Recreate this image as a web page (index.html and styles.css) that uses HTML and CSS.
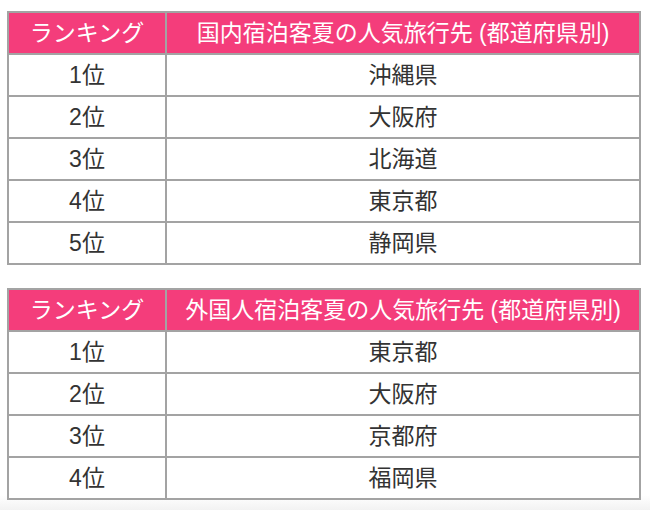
FILE: index.html
```html
<!DOCTYPE html>
<html lang="ja">
<head>
<meta charset="utf-8">
<link rel="stylesheet" href="styles.css">
</head>
<body>
<div class="page">
<table class="rank">
  <thead>
    <tr><th class="c1">ランキング</th><th class="c2">国内宿泊客夏の人気旅行先 (都道府県別)</th></tr>
  </thead>
  <tbody>
    <tr><td>1位</td><td>沖縄県</td></tr>
    <tr><td>2位</td><td>大阪府</td></tr>
    <tr><td>3位</td><td>北海道</td></tr>
    <tr><td>4位</td><td>東京都</td></tr>
    <tr><td>5位</td><td>静岡県</td></tr>
  </tbody>
</table>
<table class="rank">
  <thead>
    <tr><th class="c1">ランキング</th><th class="c2">外国人宿泊客夏の人気旅行先 (都道府県別)</th></tr>
  </thead>
  <tbody>
    <tr><td>1位</td><td>東京都</td></tr>
    <tr><td>2位</td><td>大阪府</td></tr>
    <tr><td>3位</td><td>京都府</td></tr>
    <tr><td>4位</td><td>福岡県</td></tr>
  </tbody>
</table>
</div>
</body>
</html>
```

FILE: styles.css
```css
html, body {
  margin: 0;
  padding: 0;
  height: 100%;
}
body {
  background: linear-gradient(to bottom, #ffffff 0, #ffffff 495px, #f2f2f2 510px);
  font-family: "Liberation Sans", "Noto Sans CJK JP", sans-serif;
  color: #333333;
}
.page {
  padding: 11px 9px 0 7px;
  display: flex;
  flex-direction: column;
  gap: 23px;
}
.rank {
  width: 634px;
  border-collapse: collapse;
  border: 2px solid #a3a3a3;
  background: #ffffff;
  table-layout: fixed;
}
.rank th, .rank td {
  border: 2px solid #a3a3a3;
  height: 40px;
  padding: 0;
  text-align: center;
  vertical-align: middle;
  font-size: 23px;
  line-height: 40px;
  font-weight: normal;
}
.rank th {
  background: #f43d7b;
  color: #ffffff;
}
.rank .c1 { width: 156px; }
.rank td { color: #333333; }
```
